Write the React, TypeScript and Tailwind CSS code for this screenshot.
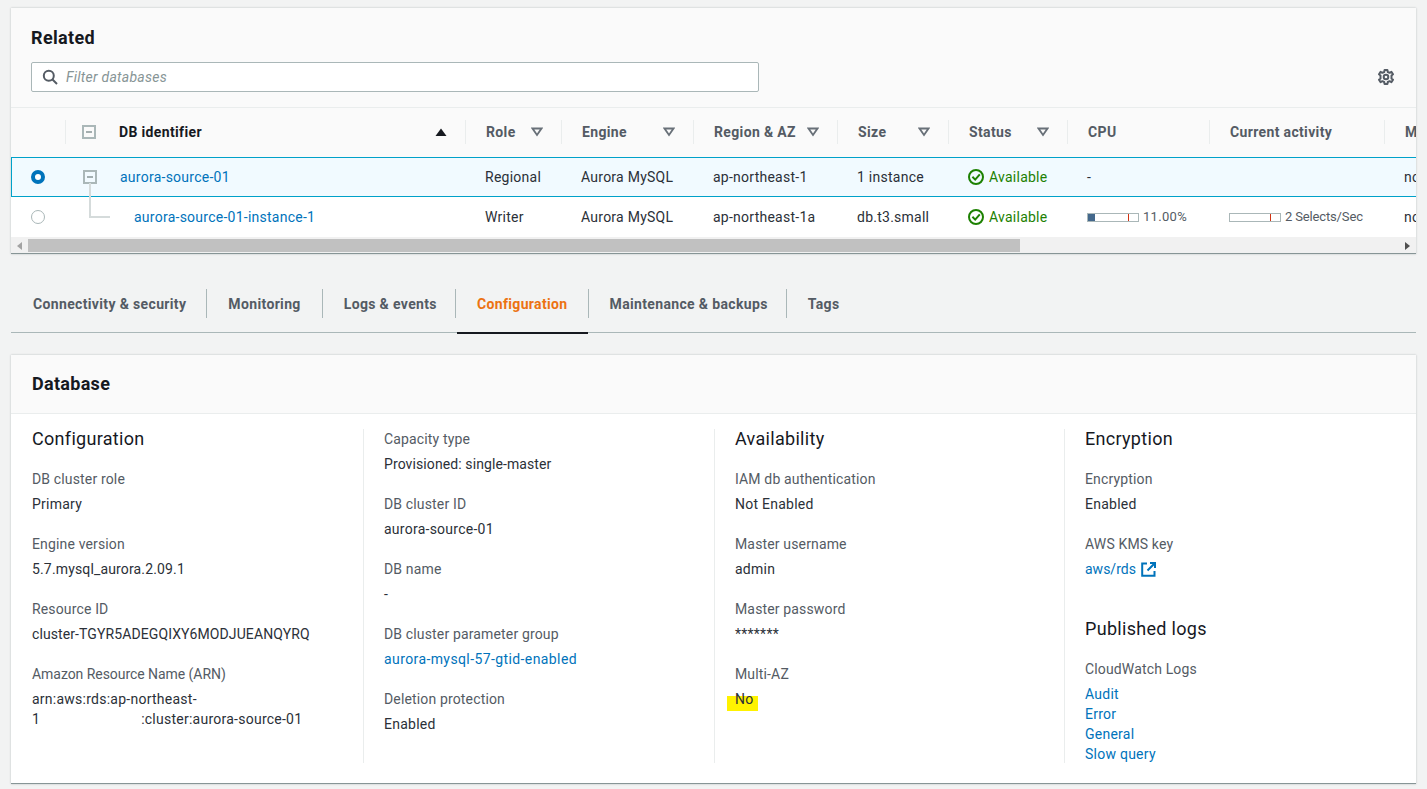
import React from "react";

const COLS = "grid-cols-[55px_400px_96px_132px_144px_111px_119px_142px_175px_32px]";
const COLS_SEL = "grid-cols-[54px_400px_96px_132px_144px_111px_119px_142px_175px_32px]";

function FilterTri() {
  return (
    <svg width="12" height="10" viewBox="0 0 12 10" className="shrink-0">
      <path d="M1.5 1.5 H10.5 L6 8 Z" fill="none" stroke="#687078" strokeWidth="1.8" strokeLinejoin="miter" />
    </svg>
  );
}

function SquareMinus() {
  return (
    <svg width="14" height="14" viewBox="0 0 14 14" className="block">
      <rect x="1" y="1" width="12" height="12" fill="none" stroke="#aab7b8" strokeWidth="2" />
      <path d="M4 7 H10" stroke="#879596" strokeWidth="1.5" />
    </svg>
  );
}

function CheckCircle() {
  return (
    <svg width="16" height="16" viewBox="0 0 16 16" className="shrink-0">
      <circle cx="8" cy="8" r="7" fill="none" stroke="#1d8102" strokeWidth="2" />
      <path d="M4.4 7.8 L7.2 10.6 L11.8 5.4" fill="none" stroke="#1d8102" strokeWidth="2" />
    </svg>
  );
}

function HeadCell({ label, filter }: { label: string; filter?: boolean }) {
  return (
    <div className="h-[24px] border-r border-[#eaeded] pl-[20px] flex items-center justify-between font-bold tracking-[0.35px] text-[#545b64] whitespace-nowrap overflow-hidden">
      <span>{label}</span>
      {filter && <span className="pr-[18px]"><FilterTri /></span>}
    </div>
  );
}

function Meter({ fill, tick }: { fill: number; tick: number }) {
  return (
    <span className="relative block w-[52px] h-[9px] border border-[#aab7b8] bg-white shrink-0">
      {fill > 0 && <span className="absolute left-0 top-0 bottom-0 bg-[#44688c]" style={{ width: fill }} />}
      <span className="absolute top-0 bottom-0 w-px bg-[#d13212]" style={{ left: tick }} />
    </span>
  );
}

function Cell({ children, className = "" }: { children?: React.ReactNode; className?: string }) {
  return <div className={`pl-[19px] flex items-center whitespace-nowrap overflow-hidden ${className}`}>{children}</div>;
}

function Available() {
  return (
    <span className="flex items-center gap-[5px] text-[#1d8102]">
      <CheckCircle />
      Available
    </span>
  );
}

function Field({ label, children, labelClass = "tracking-[0.15px]", valueClass = "" }: { label: string; children: React.ReactNode; labelClass?: string; valueClass?: string }) {
  return (
    <div className="mb-[20px]">
      <div className={`h-[20px] leading-[20px] text-[#545b64] ${labelClass}`}>{label}</div>
      <div className={`mt-[5px] leading-[20px] text-[#2b3038] ${valueClass}`}>{children}</div>
    </div>
  );
}

function Heading({ children, className = "" }: { children: React.ReactNode; className?: string }) {
  return <h3 className={`text-[18px] leading-[20px] text-[#16191f] tracking-[0.3px] ${className}`}>{children}</h3>;
}

function A({ children }: { children: React.ReactNode }) {
  return <a className="text-[#0073bb]">{children}</a>;
}

const TABS = [
  { label: "Connectivity & security", pr: "pr-[21px]" },
  { label: "Monitoring", pr: "pr-[22px]" },
  { label: "Logs & events", pr: "pr-[19px]" },
  { label: "Configuration", pr: "pr-[21px]" },
  { label: "Maintenance & backups", pr: "pr-[19px]" },
  { label: "Tags", pr: "pr-[20px]" },
];

export default function App() {
  return (
    <div className="min-h-[789px] h-[789px] overflow-hidden bg-[#f2f3f3] pt-[8px] px-[11px] text-[14px] leading-[20px] tracking-[0.25px] font-['Roboto',sans-serif] text-[#16191f]">
      {/* Related card */}
      <section className="relative w-[1405px] h-[246px] bg-white border-b border-[#879596] shadow-[0_0_2px_rgba(0,28,36,0.25)] overflow-hidden">
        <div className="h-[100px] bg-[#fafafa] border-b border-[#eaeded] pl-[20px] pr-[22px] pt-[20px]">
          <h2 className="text-[18px] leading-[20px] font-bold tracking-[0.35px]">Related</h2>
          <div className="mt-[14px] flex items-center justify-between">
            <div className="w-[728px] h-[30px] bg-white border border-[#aab7b8] rounded-[2px] flex items-center pl-[10px] gap-[8px]">
              <svg width="16" height="16" viewBox="0 0 16 16">
                <circle cx="6.8" cy="6.8" r="5" fill="none" stroke="#545b64" strokeWidth="2" />
                <path d="M10.5 10.5 L15 15" stroke="#545b64" strokeWidth="2" />
              </svg>
              <span className="italic text-[#879596]">Filter databases</span>
            </div>
            <svg width="16" height="16" viewBox="0 0 16 16">
              <path d="M6.6 1 H9.4 L9.8 3 L11.6 3.8 L13.4 2.8 L15 5.2 L13.5 6.5 V9.5 L15 10.8 L13.4 13.2 L11.6 12.2 L9.8 13 L9.4 15 H6.6 L6.2 13 L4.4 12.2 L2.6 13.2 L1 10.8 L2.5 9.5 V6.5 L1 5.2 L2.6 2.8 L4.4 3.8 L6.2 3 Z" fill="none" stroke="#545b64" strokeWidth="2" strokeLinejoin="round" />
              <circle cx="8" cy="8" r="2.3" fill="none" stroke="#545b64" strokeWidth="2" />
            </svg>
          </div>
        </div>

        {/* Table head */}
        <div className={`grid ${COLS} h-[49px] pb-[1px] items-center bg-[#fafafa]`}>
          <div className="h-[24px] border-r border-[#eaeded]" />
          <div className="h-[24px] border-r border-[#eaeded] flex items-center pl-[16px] pr-[18px]">
            <SquareMinus />
            <span className="ml-[23px] font-bold tracking-[0.35px] text-[#16191f]">DB identifier</span>
            <svg width="12" height="8" viewBox="0 0 12 8" className="ml-auto"><path d="M0.5 8 L6 0.5 L11.5 8 Z" fill="#16191f" /></svg>
          </div>
          <HeadCell label="Role" filter />
          <HeadCell label="Engine" filter />
          <HeadCell label="Region & AZ" filter />
          <HeadCell label="Size" filter />
          <HeadCell label="Status" filter />
          <HeadCell label="CPU" />
          <HeadCell label="Current activity" />
          <div className="h-[24px] pl-[20px] flex items-center font-bold text-[#545b64] overflow-hidden">M</div>
        </div>

        {/* Selected row */}
        <div className={`grid ${COLS_SEL} h-[40px] bg-[#f1faff] border border-r-0 border-[#00a1c9] text-[#2b3038]`}>
          <div className="flex items-center pl-[19px]">
            <span className="w-[14px] h-[14px] rounded-full border-[4px] border-[#0073bb] bg-white" />
          </div>
          <div className="flex items-center pl-[17px]">
            <SquareMinus />
            <span className="ml-[23px]"><A>aurora-source-01</A></span>
          </div>
          <Cell>Regional</Cell>
          <Cell>Aurora MySQL</Cell>
          <Cell>ap-northeast-1</Cell>
          <Cell>1 instance</Cell>
          <Cell><Available /></Cell>
          <Cell>-</Cell>
          <Cell />
          <Cell>no</Cell>
        </div>

        {/* Child row */}
        <div className={`grid ${COLS} relative h-[40px] bg-white text-[#2b3038]`}>
          <div className="flex items-center pl-[20px]">
            <span className="w-[14px] h-[14px] rounded-full border border-[#aab7b8] bg-white" />
          </div>
          <div className="relative flex items-center pl-[68px]">
            <span className="absolute left-[23px] top-[-14px] w-[21px] h-[35px] border-l-2 border-b-2 border-[#d5dbdb]" />
            <A>aurora-source-01-instance-1</A>
          </div>
          <Cell>Writer</Cell>
          <Cell>Aurora MySQL</Cell>
          <Cell>ap-northeast-1a</Cell>
          <Cell>db.t3.small</Cell>
          <Cell><Available /></Cell>
          <Cell className="gap-[4px] text-[#545b64] text-[13px] tracking-[0.3px]"><Meter fill={7} tick={40} />11.00%</Cell>
          <Cell className="gap-[4px] text-[#545b64] text-[13px] tracking-[-0.15px]"><Meter fill={0} tick={40} />2 Selects/Sec</Cell>
          <Cell>no</Cell>
        </div>

        {/* Scrollbar */}
        <div className="h-[16px] bg-[#f1f1f1] flex items-start pt-[2px]">
          <div className="w-[17px] h-[13px] flex items-center justify-center">
            <svg width="5" height="8" viewBox="0 0 5 8"><path d="M5 0 V8 L0 4 Z" fill="#a3a3a3" /></svg>
          </div>
          <div className="w-[992px] h-[13px] bg-[#c1c1c1]" />
          <div className="ml-auto w-[17px] h-[13px] flex items-center justify-center">
            <svg width="5" height="8" viewBox="0 0 5 8"><path d="M0 0 V8 L5 4 Z" fill="#505050" /></svg>
          </div>
        </div>
      </section>

      {/* Tabs */}
      <nav className="mt-[35px] h-[44px] w-[1405px] border-b border-[#aab7b8] flex items-start">
        {TABS.map((t, i) => {
          const active = t.label === "Configuration";
          return (
            <div
              key={t.label}
              className={`relative h-[44px] flex items-start ${i === 0 ? "pl-[22px]" : "pl-[21px]"} ${t.pr} font-bold tracking-[0.35px] ${active ? "text-[#ec7211]" : "text-[#545b64]"}`}
            >
              <span className="pt-[5px] whitespace-nowrap">{t.label}</span>
              {i < TABS.length - 1 && <span className="absolute right-0 top-0 h-[29px] w-px bg-[#aab7b8]" />}
              {active && <span className="absolute left-[1px] right-[1px] bottom-[-1px] h-[2px] bg-[#16191f]" />}
            </div>
          );
        })}
      </nav>

      {/* Database card */}
      <section className="mt-[22px] w-[1405px] h-[429px] bg-white border-b border-[#879596] shadow-[0_0_2px_rgba(0,28,36,0.25)]">
        <div className="h-[59px] bg-[#fafafa] border-b border-[#eaeded] pl-[21px] pt-[19px]">
          <h2 className="text-[18px] leading-[20px] font-bold tracking-[0.3px]">Database</h2>
        </div>
        <div className="grid grid-cols-[352px_351px_350px_351px] pt-[15px]">
          <div className="h-[334px] pl-[21px]">
            <Heading className="mb-[20px]">Configuration</Heading>
            <Field label="DB cluster role">Primary</Field>
            <Field label="Engine version" valueClass="tracking-[0.15px]">5.7.mysql_aurora.2.09.1</Field>
            <Field label="Resource ID" valueClass="tracking-[0.1px]">cluster-TGYR5ADEGQIXY6MODJUEANQYRQ</Field>
            <Field label="Amazon Resource Name (ARN)" labelClass="tracking-[-0.05px]">
              arn:aws:rds:ap-northeast-
              <br />
              1<span className="inline-block w-[101px]" />:cluster:aurora-source-01
            </Field>
          </div>
          <div className="h-[334px] border-l border-[#eaeded] pl-[20px]">
            <Field label="Capacity type" valueClass="tracking-[0.1px]">Provisioned: single-master</Field>
            <Field label="DB cluster ID">aurora-source-01</Field>
            <Field label="DB name">-</Field>
            <Field label="DB cluster parameter group" valueClass="tracking-[0.4px]"><A>aurora-mysql-57-gtid-enabled</A></Field>
            <Field label="Deletion protection">Enabled</Field>
          </div>
          <div className="h-[334px] border-l border-[#eaeded] pl-[20px]">
            <Heading className="mb-[20px]">Availability</Heading>
            <Field label="IAM db authentication">Not Enabled</Field>
            <Field label="Master username">admin</Field>
            <Field label="Master password">*******</Field>
            <Field label="Multi-AZ">
              <span className="relative inline-block">
                <span className="absolute left-[-8px] top-[7px] w-[31px] h-[15px] bg-[#fff200]" />
                <span className="relative">No</span>
              </span>
            </Field>
          </div>
          <div className="h-[334px] border-l border-[#eaeded] pl-[20px]">
            <Heading className="mb-[20px]">Encryption</Heading>
            <Field label="Encryption">Enabled</Field>
            <Field label="AWS KMS key" valueClass="tracking-normal">
              <span className="flex items-center gap-[5px]">
                <A>aws/rds</A>
                <svg width="15" height="15" viewBox="0 0 15 15">
                  <path d="M6 1.5 H1.2 V13.8 H13.5 V9" fill="none" stroke="#0073bb" strokeWidth="2" />
                  <path d="M9 1 H14 V6 M14 1 L6.5 8.5" fill="none" stroke="#0073bb" strokeWidth="2" />
                </svg>
              </span>
            </Field>
            <Heading className="mt-[40px] mb-[20px]">Published logs</Heading>
            <div className="h-[20px] text-[#545b64] tracking-[0.15px]">CloudWatch Logs</div>
            <div className="mt-[5px] flex flex-col">
              <A>Audit</A>
              <A>Error</A>
              <A>General</A>
              <A>Slow query</A>
            </div>
          </div>
        </div>
      </section>
    </div>
  );
}
